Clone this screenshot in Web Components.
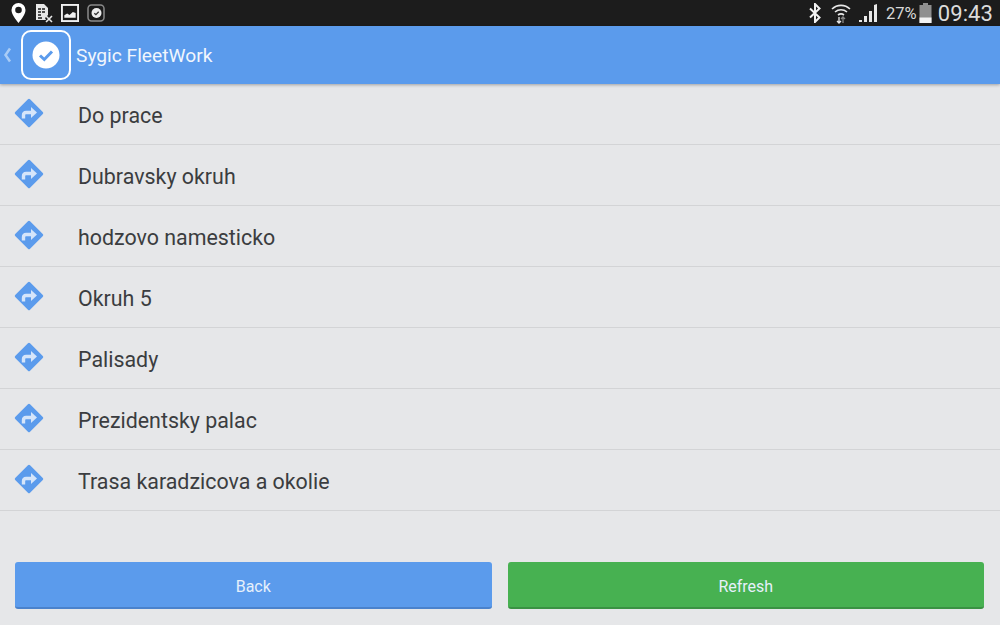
<!DOCTYPE html>
<html>
<head>
<meta charset="utf-8">
<title>Sygic FleetWork</title>
<style>
  html, body { margin: 0; height: 100%; }
  body { width: 1000px; height: 625px; overflow: hidden; font-family: Roboto, sans-serif; background: #e6e7e9; }
</style>
</head>
<body>
<fleet-app>
  <status-bar slot="status"></status-bar>
  <app-bar slot="bar" title="Sygic FleetWork"></app-bar>
  <route-item>Do prace</route-item>
  <route-item>Dubravsky okruh</route-item>
  <route-item>hodzovo namesticko</route-item>
  <route-item>Okruh 5</route-item>
  <route-item>Palisady</route-item>
  <route-item>Prezidentsky palac</route-item>
  <route-item>Trasa karadzicova a okolie</route-item>
  <action-button slot="actions" color="#5b9bec" shade="#4a82cc">Back</action-button>
  <action-button slot="actions" color="#47b151" shade="#3a9243">Refresh</action-button>
</fleet-app>

<script>
class FleetApp extends HTMLElement {
  constructor () {
    super()
    this.shadow = this.attachShadow({ mode: 'open' })
  }
  connectedCallback () {
    this.shadow.innerHTML = `
    <style>
      :host { display: flex; flex-direction: column; width: 1000px; height: 625px; }
      .list { flex: 1; display: flex; flex-direction: column; }
      .actions { display: flex; gap: 16px; padding: 0 16px 16px 15px; }
    </style>
    <slot name="status"></slot>
    <slot name="bar"></slot>
    <div class="list"><slot></slot></div>
    <div class="actions"><slot name="actions"></slot></div>
    `
  }
}

class StatusBar extends HTMLElement {
  constructor () {
    super()
    this.shadow = this.attachShadow({ mode: 'open' })
  }
  connectedCallback () {
    this.shadow.innerHTML = `
    <style>
      :host { display: flex; justify-content: space-between; align-items: center; height: 26px; background: #1c1c1c; color: #e4e4e4; padding: 0 7px 0 11px; box-sizing: border-box; }
      .left, .right { display: flex; align-items: center; }
      .left { gap: 8px; }
      .left svg:first-child { margin-right: 2px; }
      svg { display: block; }
      .pct { font-size: 16.500px; margin: 0 2px 0 6px; color: #d8d8d8; }
      .time { font-size: 22px; margin-left: 6px; letter-spacing: .1px; color: #dcdcdc; }
    </style>
    <div class="left">
      <svg width="15" height="20" viewBox="0 0 15 20"><path fill="#fff" fill-rule="evenodd" d="M7.500 0a7 7 0 0 1 7 7c0 4.500-4.600 9.800-7 13-2.400-3.200-7-8.500-7-13a7 7 0 0 1 7-7zm0 3.700a3.300 3.300 0 1 0 0 6.600 3.300 3.300 0 0 0 0-6.600z"/></svg>
      <svg width="17" height="20" viewBox="0 0 17 20"><path fill="#e8e8e8" d="M0 1h8l4 4v7l-3 3 1 2H0z"/><path stroke="#1c1c1c" stroke-width="1.300" d="M2 6h3M6 6h3M2 9h3M6 9h3M2 12h3M2 15h4"/><path stroke="#e8e8e8" stroke-width="1.600" d="M10 13l6 6M16 13l-6 6"/></svg>
      <svg width="18" height="18" viewBox="0 0 19 19"><rect x="1" y="1" width="17" height="17" fill="#1c1c1c" stroke="#f0f0f0" stroke-width="2"/><path fill="#f0f0f0" d="M3.500 14.500v-2.500l3-2 2.500 1.500 3.500-3 3 1v5z"/></svg>
      <svg width="18" height="18" viewBox="0 0 18 18"><rect x="1" y="1" width="16" height="16" rx="3.500" fill="none" stroke="#8a8a8a" stroke-width="1.500"/><circle cx="9.500" cy="9" r="5" fill="#eee"/><path d="M7.300 9.200l1.600 1.500 2.800-2.900" fill="none" stroke="#333" stroke-width="1.300"/></svg>
    </div>
    <div class="right">
      <svg width="14" height="20" viewBox="0 0 14 20" style="margin-right:9px"><path fill="none" stroke="#f2f2f2" stroke-width="2" d="M2 5.500l9.500 9L7 19V1l4.500 4.500L2 14.500"/></svg>
      <svg width="20" height="22" viewBox="0 0 20 22" style="margin-right:8px"><g fill="none" stroke="#e8e8e8" stroke-width="1.600"><path d="M1 7a13 13 0 0 1 18 0"/><path d="M4 10a9 9 0 0 1 12 0"/><path d="M7 13a5 5 0 0 1 6 0"/></g><path d="M8 15v6M6 19l2 2 2-2" fill="none" stroke="#e8e8e8" stroke-width="1.300"/><path d="M12 21v-6M10 17l2-2 2 2" fill="none" stroke="#888" stroke-width="1.300"/></svg>
      <svg width="21" height="18" viewBox="0 0 21 18"><path fill="#e8e8e8" d="M0 18v-2h3v2zM5 18v-6h3v6zM10 18V7h3v11zM15 18V1l3-1v18z"/></svg>
      <span class="pct">27%</span>
      <svg width="13" height="20" viewBox="0 0 12 20"><path fill="#8f8f8f" d="M3.500 0h5v2H12v18H0V2h3.500z"/><rect y="14.500" width="12" height="5.500" fill="#f2f2f2"/></svg>
      <span class="time">09:43</span>
    </div>
    `
  }
}

class AppBar extends HTMLElement {
  constructor () {
    super()
    this.shadow = this.attachShadow({ mode: 'open' })
  }
  connectedCallback () {
    this.shadow.innerHTML = `
    <style>
      :host { display: flex; align-items: center; height: 58px; background: #5b9bec; color: #fff; box-shadow: 0 1px 3px rgba(0,0,0,.3); position: relative; padding-left: 4px; box-sizing: border-box; }
      .logo { width: 50px; height: 50px; box-sizing: border-box; border: 2px solid #fff; border-radius: 10px; margin: 0 5px 0 0; display: flex; align-items: center; justify-content: center; }
      .back { margin-right: 9px; margin-left: -1px; }
      svg { display: block; }
      .title { font-size: 19.200px; color: #f1f6fd; margin-top: 1px; }
    </style>
    <svg class="back" width="9" height="16" viewBox="0 0 9 16"><path d="M7 1.500 2.500 8 7 14.500" fill="none" stroke="#a9ccf6" stroke-width="2.500"/></svg>
    <div class="logo">
      <svg width="28" height="28" viewBox="0 0 28 28"><circle cx="14" cy="14" r="13.500" fill="#fff"/><path d="M8 14.500l4.300 4 7.700-8" fill="none" stroke="#5b9bec" stroke-width="3"/></svg>
    </div>
    <span class="title">${this.getAttribute('title')}</span>
    `
  }
}

class RouteItem extends HTMLElement {
  constructor () {
    super()
    this.shadow = this.attachShadow({ mode: 'open' })
  }
  connectedCallback () {
    this.shadow.innerHTML = `
    <style>
      :host { display: flex; align-items: center; height: 61px; box-sizing: border-box; border-bottom: 1px solid #d3d4d6; padding: 3px 0 0 14px; color: #3b3d40; font-size: 21.400px; }
      svg { display: block; margin: -6px 34px 0 0; flex: none; }
    </style>
    <svg width="30" height="30" viewBox="0 0 30 30">
      <rect x="4.500" y="4.500" width="21" height="21" rx="1.500" transform="rotate(45 15 15)" fill="#5b9bec"/>
      <path d="M9.500 20.500v-3.500q0-2.500 2.500-2.500h6" fill="none" stroke="#d5e5fa" stroke-width="3.400"/>
      <path d="M17 9l6 5.500-6 5.500z" fill="#d5e5fa"/>
    </svg>
    <slot></slot>
    `
  }
}

class ActionButton extends HTMLElement {
  constructor () {
    super()
    this.shadow = this.attachShadow({ mode: 'open' })
  }
  connectedCallback () {
    const color = this.getAttribute('color')
    const shade = this.getAttribute('shade')
    this.shadow.innerHTML = `
    <style>
      :host { flex: 1; display: flex; align-items: center; justify-content: center; height: 47px; box-sizing: border-box; border-radius: 3px; padding-top: 3px; background: ${color}; border-bottom: 2px solid ${shade}; color: #e6f0fb; font-size: 16px; }
    </style>
    <slot></slot>
    `
  }
}

customElements.define('fleet-app', FleetApp)
customElements.define('status-bar', StatusBar)
customElements.define('app-bar', AppBar)
customElements.define('route-item', RouteItem)
customElements.define('action-button', ActionButton)
</script>
</body>
</html>
